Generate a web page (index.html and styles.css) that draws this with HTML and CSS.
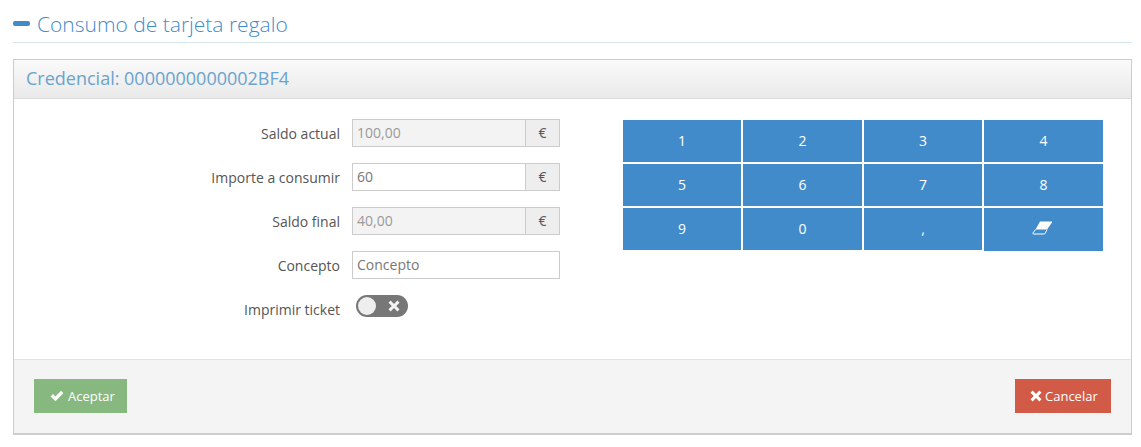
FILE: index.html
```html
<!DOCTYPE html>
<html lang="es">
<head>
<meta charset="utf-8">
<title>Consumo de tarjeta regalo</title>
<link rel="stylesheet" href="styles.css">
</head>
<body>
<h1 class="page-title"><span class="dash"></span>Consumo de tarjeta regalo</h1>
<section class="panel">
  <header class="panel-head">Credencial: 0000000000002BF4</header>
  <div class="panel-body">
    <form class="form">
      <div class="row"><label class="lbl">Saldo actual</label><div class="group"><div class="input off">100,00</div><div class="addon">€</div></div></div>
      <div class="row"><label class="lbl">Importe a consumir</label><div class="group"><div class="input">60</div><div class="addon">€</div></div></div>
      <div class="row"><label class="lbl">Saldo final</label><div class="group"><div class="input off">40,00</div><div class="addon">€</div></div></div>
      <div class="row"><label class="lbl">Concepto</label><div class="group"><div class="input">Concepto</div></div></div>
      <div class="row row-toggle"><label class="lbl">Imprimir ticket</label>
        <div class="toggle"><span class="knob"></span>
          <svg class="toggle-x" viewBox="0 0 12 12"><path d="M2.600 .6 6 3.900 9.400 .6 11.500 2.700 8.200 6l3.300 3.300-2.100 2.100L6 8.100 2.600 11.400 .5 9.300 3.800 6 .5 2.700z"/></svg>
        </div>
      </div>
    </form>
    <div class="keypad">
      <button class="key" type="button">1</button>
      <button class="key" type="button">2</button>
      <button class="key" type="button">3</button>
      <button class="key" type="button">4</button>
      <button class="key" type="button">5</button>
      <button class="key" type="button">6</button>
      <button class="key" type="button">7</button>
      <button class="key" type="button">8</button>
      <button class="key" type="button">9</button>
      <button class="key" type="button">0</button>
      <button class="key" type="button">,</button>
      <button class="key key-erase" type="button" aria-label="Borrar">
        <svg class="eraser" width="21" height="14" viewBox="0 0 21 14"><path class="eraser-top" d="M8 .5h11.500q1 0 .5 1L15 8.500H3.500z"/><path class="eraser-line" d="M3.500 8.500 1 12q-.5 1 .5 1H12q.8 0 1.300-.8L15 8.500"/></svg>
      </button>
    </div>
  </div>
  <footer class="panel-foot">
    <button class="btn btn-ok" type="button">
      <svg class="ico ico-check" viewBox="0 0 14 12"><path d="M.6 6.500 3 4.100 5.400 6.400 11 .8 13.400 3.200 5.400 11.200z"/></svg>Aceptar</button>
    <button class="btn btn-no" type="button">
      <svg class="ico ico-x" viewBox="0 0 12 12"><path d="M2.600 .6 6 3.900 9.400 .6 11.500 2.700 8.200 6l3.300 3.300-2.100 2.100L6 8.100 2.600 11.400 .5 9.300 3.800 6 .5 2.700z"/></svg>Cancelar</button>
  </footer>
</section>
</body>
</html>
```
FILE: styles.css
```css
* { box-sizing: border-box; }
html, body { margin: 0; background: #fff; }
body {
  padding: 0 9px 0 13px;
  font-family: "Open Sans", sans-serif;
  font-size: 13px;
  color: #555;
}
.page-title {
  display: flex;
  align-items: center;
  height: 43px;
  margin: 0 0 16px;
  padding-top: 6px;
  border-bottom: 1px solid #d6e4ef;
  font-size: 21px;
  font-weight: 300;
  color: #428bca;
}
.dash {
  width: 17px;
  height: 5px;
  margin-right: 7px;
  margin-top: -1px;
  border-radius: 2px;
  background: #428bca;
}
.panel {
  height: 376px;
  display: flex;
  flex-direction: column;
  border: 1px solid #ccc;
  border-bottom-width: 2px;
}
.panel-head {
  height: 39px;
  padding: 6px 12px 0;
  border-bottom: 1px solid #ddd;
  background: linear-gradient(#fafafa, #e9e9e9);
  font-size: 18px;
  color: #6ba3cd;
}
.panel-body {
  flex: 1;
  display: flex;
  padding: 20px 28px 0 0;
  background: #fff;
  border-bottom: 1px solid #e3e3e3;
}
.form { width: 546px; flex: none; margin-right: 63px; }
.row {
  display: flex;
  height: 28px;
  margin-bottom: 16px;
  align-items: center;
}
.lbl {
  width: 326px;
  padding-top: 1px;
  margin-right: 12px;
  text-align: right;
  font-size: 14px;
  color: #555;
}
.group { display: flex; width: 208px; height: 28px; }
.input {
  flex: 1;
  height: 28px;
  padding: 3px 4px;
  border: 1px solid #ccc;
  background: #fff;
  font-size: 14px;
  color: #777;
}
.off { background: #f3f3f3; color: #999; }
.addon {
  width: 34px;
  height: 28px;
  border: 1px solid #ccc;
  border-left: 0;
  background: #eee;
  text-align: center;
  line-height: 26px;
  font-size: 14px;
  color: #555;
}
.row-toggle { height: 22px; }
.row-toggle .lbl { padding-top: 7px; }
.toggle {
  position: relative;
  width: 52px;
  height: 22px;
  margin-left: 4px;
  border-radius: 11px;
  background: #777;
}
.knob {
  position: absolute;
  left: 2px;
  top: 2px;
  width: 18px;
  height: 18px;
  border-radius: 50%;
  background: #eee;
}
.toggle-x {
  position: absolute;
  left: 32px;
  top: 5px;
  width: 12px;
  height: 12px;
  fill: #f4f4f4;
}
.keypad {
  flex: none;
  align-self: flex-start;
  display: grid;
  grid-template-columns: 118px 119px 118px 119px;
  gap: 2px;
  width: 480px;
  margin-top: 1px;
}
.key {
  height: 42px;
  padding: 0 0 2px;
  border: 0;
  background: #428bca;
  font-family: inherit;
  font-size: 14px;
  color: #fff;
}
.key-erase { height: 43px; padding: 0 3px 3px 0; }
.eraser { display: block; margin: 0 auto; }
.eraser-top { fill: #fff; }
.eraser-line { fill: none; stroke: #fff; stroke-width: 1; }
.panel-foot {
  height: 73px;
  display: flex;
  justify-content: space-between;
  align-items: flex-start;
  padding: 19px 20px 0;
  background: #f4f4f4;
}
.btn {
  display: flex;
  align-items: center;
  height: 34px;
  border: 0;
  padding: 0;
  font-family: inherit;
  font-size: 13px;
  color: #fff;
}
.btn-ok { width: 93px; padding-left: 16px; background: #87b87f; }
.btn-no { width: 96px; padding-left: 15px; background: #d15b47; }
.ico { fill: #fff; margin-right: 4px; }
.ico-check { width: 14px; height: 12px; }
.ico-x { width: 12px; height: 12px; margin-right: 3px; }
```
